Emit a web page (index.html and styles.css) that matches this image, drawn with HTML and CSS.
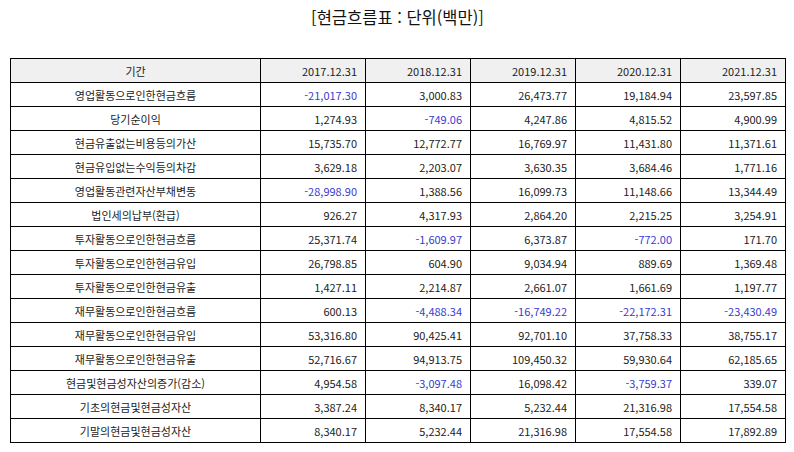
FILE: index.html
```html
<!DOCTYPE html>
<html lang="ko">
<head>
<meta charset="utf-8">
<link rel="stylesheet" href="styles.css">
</head>
<body>
<div class="page">
  <h1 class="title">[현금흐름표 : 단위(백만)]</h1>
  <table class="cf">
    <colgroup>
      <col class="c-label"><col class="c-num"><col class="c-num"><col class="c-num"><col class="c-num"><col class="c-num">
    </colgroup>
    <thead>
      <tr><th>기간</th><th>2017.12.31</th><th>2018.12.31</th><th>2019.12.31</th><th>2020.12.31</th><th>2021.12.31</th></tr>
    </thead>
    <tbody>
      <tr><td>영업활동으로인한현금흐름</td><td class="neg">-21,017.30</td><td>3,000.83</td><td>26,473.77</td><td>19,184.94</td><td>23,597.85</td></tr>
      <tr><td>당기순이익</td><td>1,274.93</td><td class="neg">-749.06</td><td>4,247.86</td><td>4,815.52</td><td>4,900.99</td></tr>
      <tr><td>현금유출없는비용등의가산</td><td>15,735.70</td><td>12,772.77</td><td>16,769.97</td><td>11,431.80</td><td>11,371.61</td></tr>
      <tr><td>현금유입없는수익등의차감</td><td>3,629.18</td><td>2,203.07</td><td>3,630.35</td><td>3,684.46</td><td>1,771.16</td></tr>
      <tr><td>영업활동관련자산부채변동</td><td class="neg">-28,998.90</td><td>1,388.56</td><td>16,099.73</td><td>11,148.66</td><td>13,344.49</td></tr>
      <tr><td>법인세의납부(환급)</td><td>926.27</td><td>4,317.93</td><td>2,864.20</td><td>2,215.25</td><td>3,254.91</td></tr>
      <tr><td>투자활동으로인한현금흐름</td><td>25,371.74</td><td class="neg">-1,609.97</td><td>6,373.87</td><td class="neg">-772.00</td><td>171.70</td></tr>
      <tr><td>투자활동으로인한현금유입</td><td>26,798.85</td><td>604.90</td><td>9,034.94</td><td>889.69</td><td>1,369.48</td></tr>
      <tr><td>투자활동으로인한현금유출</td><td>1,427.11</td><td>2,214.87</td><td>2,661.07</td><td>1,661.69</td><td>1,197.77</td></tr>
      <tr><td>재무활동으로인한현금흐름</td><td>600.13</td><td class="neg">-4,488.34</td><td class="neg">-16,749.22</td><td class="neg">-22,172.31</td><td class="neg">-23,430.49</td></tr>
      <tr><td>재무활동으로인한현금유입</td><td>53,316.80</td><td>90,425.41</td><td>92,701.10</td><td>37,758.33</td><td>38,755.17</td></tr>
      <tr><td>재무활동으로인한현금유출</td><td>52,716.67</td><td>94,913.75</td><td>109,450.32</td><td>59,930.64</td><td>62,185.65</td></tr>
      <tr><td>현금및현금성자산의증가(감소)</td><td>4,954.58</td><td class="neg">-3,097.48</td><td>16,098.42</td><td class="neg">-3,759.37</td><td>339.07</td></tr>
      <tr><td>기초의현금및현금성자산</td><td>3,387.24</td><td>8,340.17</td><td>5,232.44</td><td>21,316.98</td><td>17,554.58</td></tr>
      <tr><td>기말의현금및현금성자산</td><td>8,340.17</td><td>5,232.44</td><td>21,316.98</td><td>17,554.58</td><td>17,892.89</td></tr>
    </tbody>
  </table>
</div>
</body>
</html>
```

FILE: styles.css
```css
html, body {
  margin: 0;
  padding: 0;
  background: #ffffff;
}
.page {
  padding: 0 9px 0 10px;
  font-family: "Noto Sans CJK KR", "Noto Sans", sans-serif;
  color: #222222;
}
.title {
  margin: 0;
  height: 58px;
  padding-top: 6px;
  box-sizing: border-box;
  text-align: center;
  font-size: 16.5px;
  font-weight: normal;
  line-height: 22px;
  color: #111111;
}
.cf {
  width: 776px;
  border-collapse: collapse;
  table-layout: fixed;
  font-size: 11px;
}
.cf .c-label {
  width: 250px;
}
.cf .c-num {
  width: 105px;
}
.cf tr {
  height: 24px;
}
.cf th, .cf td {
  border: 1px solid #000000;
  padding: 0 8px;
  line-height: 14px;
  font-weight: normal;
  text-align: right;
  color: #222222;
  white-space: nowrap;
}
.cf th:first-child, .cf td:first-child {
  text-align: center;
}
.cf thead th {
  background: #f0f0f0;
}
.cf td.neg {
  color: #3a3ad0;
}
```
